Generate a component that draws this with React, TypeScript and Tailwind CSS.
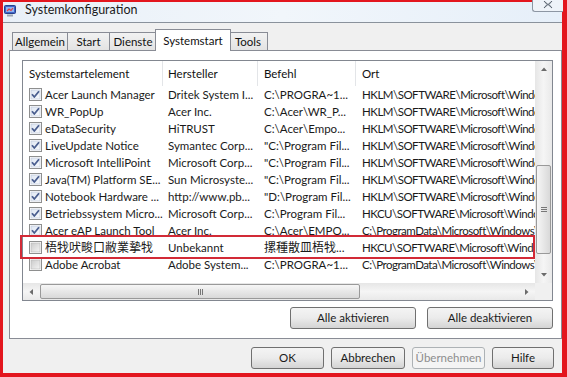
import type { ReactNode } from 'react'

const ui = { fontFamily: 'Lato, "Noto Sans CJK SC", sans-serif' }

interface Row {
  on: boolean
  name: string
  maker: string
  cmd: string
  loc: string
  cjk?: boolean
}

const rows: Row[] = [
  { on: true, name: 'Acer Launch Manager', maker: 'Dritek System I...', cmd: 'C:\\PROGRA~1...', loc: 'HKLM\\SOFTWARE\\Microsoft\\Windows\\CurrentVersion\\Run' },
  { on: true, name: 'WR_PopUp', maker: 'Acer Inc.', cmd: 'C:\\Acer\\WR_P...', loc: 'HKLM\\SOFTWARE\\Microsoft\\Windows\\CurrentVersion\\Run' },
  { on: true, name: 'eDataSecurity', maker: 'HiTRUST', cmd: 'C:\\Acer\\Empo...', loc: 'HKLM\\SOFTWARE\\Microsoft\\Windows\\CurrentVersion\\Run' },
  { on: true, name: 'LiveUpdate Notice', maker: 'Symantec Corp...', cmd: '"C:\\Program Fil...', loc: 'HKLM\\SOFTWARE\\Microsoft\\Windows\\CurrentVersion\\Run' },
  { on: true, name: 'Microsoft IntelliPoint', maker: 'Microsoft Corp...', cmd: '"C:\\Program Fil...', loc: 'HKLM\\SOFTWARE\\Microsoft\\Windows\\CurrentVersion\\Run' },
  { on: true, name: 'Java(TM) Platform SE...', maker: 'Sun Microsyste...', cmd: '"C:\\Program Fil...', loc: 'HKLM\\SOFTWARE\\Microsoft\\Windows\\CurrentVersion\\Run' },
  { on: true, name: 'Notebook Hardware ...', maker: 'http://www.pb...', cmd: '"D:\\Program Fil...', loc: 'HKLM\\SOFTWARE\\Microsoft\\Windows\\CurrentVersion\\Run' },
  { on: true, name: 'Betriebssystem Micro...', maker: 'Microsoft Corp...', cmd: 'C:\\Program Fil...', loc: 'HKCU\\SOFTWARE\\Microsoft\\Windows\\CurrentVersion\\Run' },
  { on: true, name: 'Acer eAP Launch Tool', maker: 'Acer Inc.', cmd: 'C:\\Acer\\EMPO...', loc: 'C:\\ProgramData\\Microsoft\\Windows\\Start Menu' },
  { on: false, name: '梧牫吠畯口敝業摯牫', maker: 'Unbekannt', cmd: '摞種散皿梧牫...', loc: 'HKCU\\SOFTWARE\\Microsoft\\Windows\\CurrentVersion\\Run', cjk: true },
  { on: false, name: 'Adobe Acrobat', maker: 'Adobe System...', cmd: 'C:\\PROGRA~1...', loc: 'C:\\ProgramData\\Microsoft\\Windows\\Start Menu' },
]

function CheckBox({ on }: { on: boolean }) {
  return (
    <svg width="13" height="13" viewBox="0 0 13 13" className="shrink-0">
      <defs>
        <linearGradient id={on ? 'cbOn' : 'cbOff'} x1="0" y1="0" x2="1" y2="1">
          <stop offset="0" stopColor={on ? '#dfe7f3' : '#cbcbcb'} />
          <stop offset="1" stopColor={on ? '#f7f9fc' : '#f4f4f4'} />
        </linearGradient>
      </defs>
      <rect x="0.5" y="0.5" width="12" height="12" fill="#fff" stroke="#8e8f8f" />
      <rect x="2" y="2" width="9" height="9" fill={`url(#${on ? 'cbOn' : 'cbOff'})`} stroke={on ? '#b9c4d6' : '#b5b5b5'} strokeWidth="0.6" />
      {on && (
        <path d="M3 6.2 L5.3 9 L10 3.2" fill="none" stroke="#4a5e8f" strokeWidth="1.8" strokeLinejoin="round" />
      )}
    </svg>
  )
}

function WinButton({ children, className = '', disabled = false }: { children: ReactNode; className?: string; disabled?: boolean }) {
  return (
    <button
      disabled={disabled}
      className={
        'flex h-[22px] items-center justify-center rounded-[3px] border text-[11.5px] ' +
        (disabled
          ? 'border-[#adb2b5] bg-[#f4f4f4] text-[#8d8d8d] '
          : 'border-[#707070] bg-gradient-to-b from-[#f4f4f4] via-[#ebebeb] to-[#d4d4d4] text-[#1a1a1a] ') +
        className
      }
    >
      {children}
    </button>
  )
}

function Tab({ label, active = false, w }: { label: string; active?: boolean; w: string }) {
  if (active) {
    return (
      <div className={`relative z-10 -mx-[2px] -mb-px flex h-[22px] items-start justify-center border border-b-0 border-[#898c95] bg-white pt-[2px] text-[11.5px] ${w}`}>
        {label}
      </div>
    )
  }
  return (
    <div className={`flex h-[18px] items-center justify-center border border-b-0 border-l-0 border-[#898c95] bg-gradient-to-b from-[#f2f2f2] to-[#e3e3e3] text-[11.5px] first:border-l ${w}`}>
      {label}
    </div>
  )
}

function Arrow({ dir }: { dir: 'up' | 'down' | 'left' | 'right' }) {
  const d = {
    up: 'M1 5 L4 1.5 L7 5 Z',
    down: 'M1 2 L4 5.5 L7 2 Z',
    left: 'M5 1 L1.5 4 L5 7 Z',
    right: 'M2 1 L5.5 4 L2 7 Z',
  }[dir]
  return (
    <svg width="8" height="8" viewBox="0 0 8 8">
      <path d={d} fill="#6b6b6b" />
    </svg>
  )
}

export default function App() {
  return (
    <div style={ui} className="h-[377px] w-[567px] overflow-hidden bg-[#e3161e] pb-[4px] pl-[3px] pr-[5px] pt-[2px] text-[#111]">
      <div className="flex h-full flex-col bg-[#f0f0f0]">
        {/* title bar */}
        <div className="relative flex h-[21px] shrink-0 items-center border-b border-[#8a929c] bg-gradient-to-r from-[#e9f0f8] via-[#f1f6fb] to-[#e6eff9]">
          <svg width="12" height="12" viewBox="0 0 12 12" className="ml-[1px] mt-[-3px]">
            <rect x="0.5" y="0.5" width="11" height="8" rx="1" fill="#3d64c8" stroke="#27408a" />
            <rect x="2" y="2" width="8" height="5" fill="#8fb4f0" />
            <path d="M3 6 L5 4 L7 5.5 L9 3" stroke="#e04040" strokeWidth="1.2" fill="none" />
            <rect x="3" y="9.5" width="6" height="2" fill="#9aa3b2" />
          </svg>
          <span className="ml-[9px] mt-[-3px] text-[12.5px] text-[#1b1b1b]">Systemkonfiguration</span>
          <div className="absolute right-[-1px] top-[-2px] flex h-[12px] w-[31px] items-center justify-center rounded-bl-[3px] border border-t-0 border-r-0 border-[#8d96a3] bg-[#eef3f9]">
            <svg width="10" height="8" viewBox="0 0 10 8" className="mt-[-2px]">
              <path d="M1 0 L4 3.5 L1 7 M9 0 L6 3.5 L9 7 M1 0 L9 7 M9 0 L1 7" stroke="#5a6470" strokeWidth="0.9" fill="none" />
            </svg>
          </div>
        </div>

        {/* tabs */}
        <div className="ml-[9px] mt-[6px] flex items-end">
          <Tab label="Allgemein" w="w-[56px]" />
          <Tab label="Start" w="w-[42px]" />
          <Tab label="Dienste" w="w-[47px]" />
          <Tab label="Systemstart" active w="w-[76px]" />
          <Tab label="Tools" w="w-[39px]" />
        </div>

        {/* panel */}
        <div className="ml-[6px] flex h-[289px] flex-col border border-[#898c95] bg-white pl-[12px] pr-[8px] pt-[9px]">
          <div className="relative grid h-[241px] grid-cols-[1fr_17px] grid-rows-[1fr_17px] border border-[#828790]">
            {/* table */}
            <div className="overflow-hidden text-[11.5px]">
              <div className="flex h-[25px] items-center">
                <div className="w-[140px] shrink-0 border-r border-[#e3e5e8] pl-[6px] leading-[25px]">Systemstartelement</div>
                <div className="w-[95px] shrink-0 border-r border-[#e3e5e8] pl-[5px] leading-[25px]">Hersteller</div>
                <div className="w-[98px] shrink-0 border-r border-[#e3e5e8] pl-[6px] leading-[25px]">Befehl</div>
                <div className="pl-[6px] leading-[25px]">Ort</div>
              </div>
              {rows.map((r) => (
                <div key={r.name} className="flex h-[17px] items-center whitespace-nowrap text-[#1a1a1a]">
                  <div className="flex w-[140px] shrink-0 items-center gap-[3px] overflow-hidden pl-[6px]">
                    <CheckBox on={r.on} />
                    <span className={r.cjk ? 'text-[12px]' : ''}>{r.name}</span>
                  </div>
                  <div className="w-[95px] shrink-0 overflow-hidden pl-[5px]">{r.maker}</div>
                  <div className={`w-[98px] shrink-0 overflow-hidden pl-[6px] ${r.cjk ? 'text-[12px]' : ''}`}>{r.cmd}</div>
                  <div className="pl-[6px] tracking-[-0.5px]">{r.loc}</div>
                </div>
              ))}
            </div>

            {/* vertical scrollbar */}
            <div className="flex flex-col items-center bg-gradient-to-r from-[#e6e6e6] via-[#f5f5f5] to-[#e9e9e9]">
              <div className="flex h-[17px] items-center justify-center">
                <Arrow dir="up" />
              </div>
              <div className="mt-[87px] flex h-[89px] w-[15px] items-center justify-center rounded-[2px] border border-[#999] bg-gradient-to-r from-[#f6f6f6] to-[#d9d9d9]">
                <div className="flex flex-col gap-[1px]">
                  <div className="h-px w-[6px] bg-[#777]" />
                  <div className="h-px w-[6px] bg-[#777]" />
                  <div className="h-px w-[6px] bg-[#777]" />
                </div>
              </div>
              <div className="mt-auto flex h-[17px] items-center justify-center">
                <Arrow dir="down" />
              </div>
            </div>

            {/* horizontal scrollbar */}
            <div className="flex items-center bg-gradient-to-b from-[#e6e6e6] via-[#f5f5f5] to-[#e9e9e9]">
              <div className="flex w-[17px] justify-center">
                <Arrow dir="left" />
              </div>
              <div className="flex h-[15px] w-[320px] items-center justify-center rounded-[2px] border border-[#999] bg-gradient-to-b from-[#f6f6f6] to-[#d9d9d9]">
                <div className="flex gap-[1px]">
                  <div className="h-[6px] w-px bg-[#777]" />
                  <div className="h-[6px] w-px bg-[#777]" />
                  <div className="h-[6px] w-px bg-[#777]" />
                </div>
              </div>
              <div className="ml-auto flex w-[17px] justify-center">
                <Arrow dir="right" />
              </div>
            </div>
            <div className="bg-[#f0f0f0]" />

            {/* highlight */}
            <div className="pointer-events-none absolute left-[-3px] top-[174px] h-[24px] w-[515px] border-2 border-[#d22a36]" />
          </div>

          <div className="mt-[6px] flex justify-end gap-[11px]">
            <WinButton className="w-[126px]">Alle aktivieren</WinButton>
            <WinButton className="w-[126px]">Alle deaktivieren</WinButton>
          </div>
        </div>

        {/* dialog buttons */}
        <div className="mt-[8px] flex justify-end gap-[7px] pr-[8px]">
          <WinButton className="w-[73px]">OK</WinButton>
          <WinButton className="w-[74px]">Abbrechen</WinButton>
          <WinButton className="w-[73px]" disabled>Übernehmen</WinButton>
          <WinButton className="w-[62px]">Hilfe</WinButton>
        </div>
      </div>
    </div>
  )
}
